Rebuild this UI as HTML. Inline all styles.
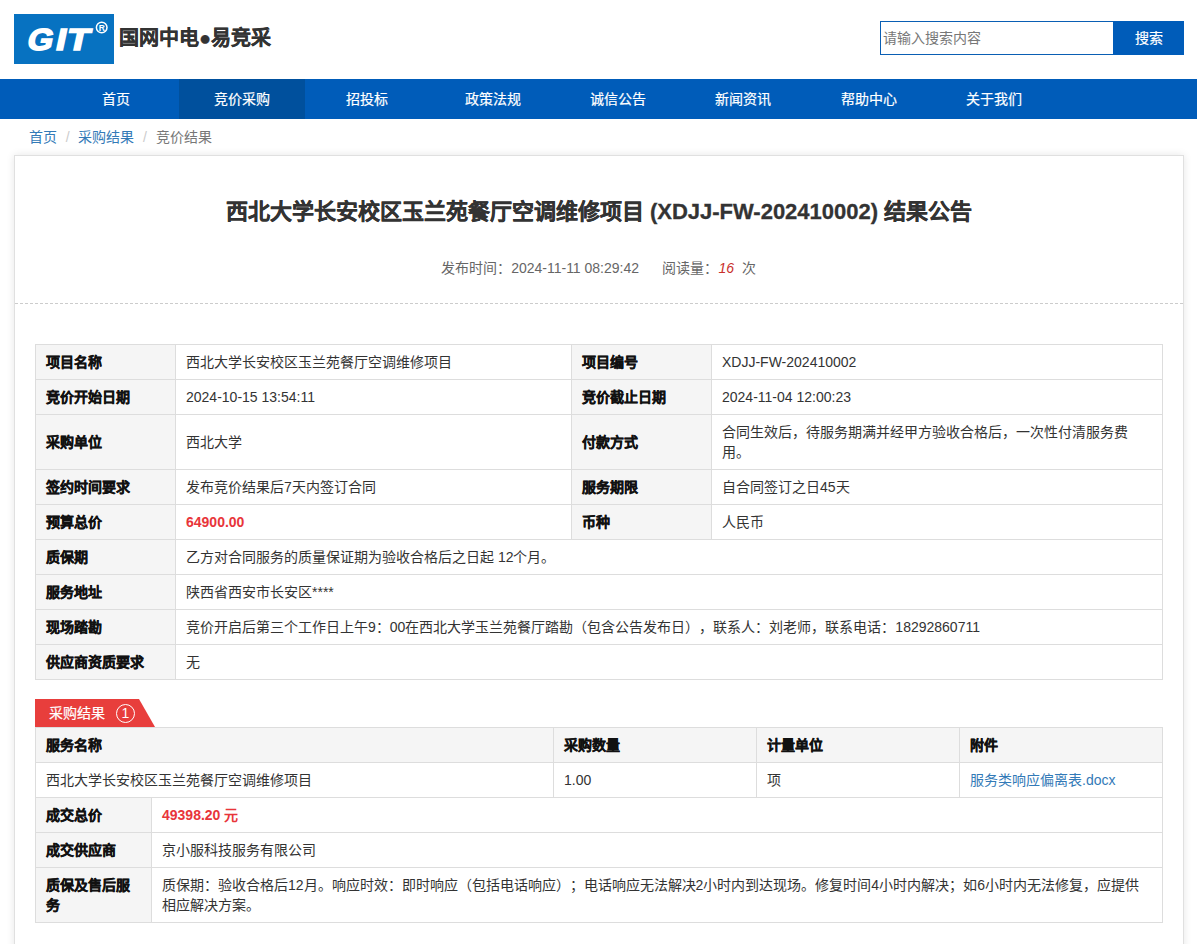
<!DOCTYPE html>
<html lang="zh-CN"><head><meta charset="utf-8">
<style>
*{box-sizing:border-box;margin:0;padding:0}
html,body{width:1197px;height:944px;overflow:hidden;background:#fff}
body{text-spacing-trim:space-all;font-family:"Liberation Sans",sans-serif;font-size:14px;line-height:20px;color:#333;position:relative}
.abs{position:absolute}
#logo{left:14px;top:14px;width:100px;height:50px;background:#0772c1}
#brand{left:119px;top:23px;font-size:20px;line-height:30px;font-weight:bold;color:#333;white-space:nowrap}
#search{left:880px;top:21px;width:233px;height:34px;border:1px solid #0a5fb4;border-right:0;color:#777;padding-left:2px;line-height:32px;font-size:14px}
#sbtn{left:1113px;top:21px;width:71px;height:34px;background:#005cb9;color:#fff;text-align:center;line-height:34px}
#nav{left:0;top:79px;width:1197px;height:40px;background:#005cb9}
#nav div{position:absolute;top:0;height:40px;width:125.4px;text-align:center;color:#fff;line-height:40px;white-space:nowrap}
#nav div.on{background:#00509d;width:126px}
#crumb{left:29px;top:127px;white-space:nowrap;color:#777}
#crumb a{color:#337ab7;text-decoration:none}
#crumb .sep{color:#ccc;padding:0 8.7px}
#panel{left:14px;top:155px;width:1170px;height:800px;border:1px solid #e0e0e0;box-shadow:0 0 8px rgba(0,0,0,.1)}

#title{left:15px;top:192px;width:1168px;text-align:center;font-size:22px;line-height:40px;font-weight:bold;color:#333;white-space:nowrap}
#meta{left:14.5px;top:258px;width:1168px;text-align:center;color:#666;white-space:nowrap}
#meta i{color:#c9302c}
#dash{left:15px;top:303px;width:1168px;height:1px;background:repeating-linear-gradient(90deg,#ccc 0,#ccc 3px,transparent 3px,transparent 5px)}
table{position:absolute;border-collapse:collapse;table-layout:fixed;border-spacing:0}
td,th{border:1px solid #ddd;padding:7px 10px;line-height:20px;text-align:left;vertical-align:middle;white-space:nowrap;overflow:hidden}
td.l,th{background:#f5f5f5;font-weight:bold;color:#111}
.red{color:#e8353a;font-weight:bold}
a.lnk{color:#337ab7;text-decoration:none}
#tab{left:35px;top:699px;width:120px;height:28px}
#tab span{position:absolute;left:14px;top:4px;color:#fff;white-space:nowrap}
#tab b{position:absolute;left:81px;top:5px;width:19px;height:19px;border:1px solid #fff;border-radius:50%;color:#fff;font-weight:normal;text-align:center;line-height:17px;font-size:14px}
#title,#brand,td.l,th{-webkit-text-stroke:0.3px currentColor}
#nav div,#sbtn,#tab span{-webkit-text-stroke:0.2px #fff}
</style></head><body>
<div id="logo" class="abs"><svg width="100" height="50"><g transform="translate(0,36) skewX(-12)" fill="#fff" stroke="#fff" stroke-width="1.6" font-family="Liberation Sans" font-weight="bold" font-size="30.5"><text x="12" y="0" textLength="25.5" lengthAdjust="spacingAndGlyphs">G</text><text x="40.5" y="0" textLength="10" lengthAdjust="spacingAndGlyphs">I</text><text x="51.5" y="0" textLength="22.5" lengthAdjust="spacingAndGlyphs">T</text></g><circle cx="87.7" cy="13.5" r="5.3" fill="none" stroke="#fff" stroke-width="1.5"/><text x="87.7" y="16.6" font-family="Liberation Sans" font-weight="bold" font-size="8.5" fill="#fff" text-anchor="middle">R</text></svg></div>
<div id="brand" class="abs">国网中电●易竞采</div>
<div id="search" class="abs">请输入搜索内容</div>
<div id="sbtn" class="abs">搜索</div>
<div id="nav" class="abs">
<div style="left:53.7px">首页</div>
<div class="on" style="left:179.1px">竞价采购</div>
<div style="left:304.5px">招投标</div>
<div style="left:429.9px">政策法规</div>
<div style="left:555.3px">诚信公告</div>
<div style="left:680.7px">新闻资讯</div>
<div style="left:806.1px">帮助中心</div>
<div style="left:931.5px">关于我们</div>
</div>
<div id="crumb" class="abs"><a>首页</a><span class="sep">/</span><a>采购结果</a><span class="sep">/</span>竞价结果</div>
<div id="panel" class="abs"></div>

<div id="title" class="abs">西北大学长安校区玉兰苑餐厅空调维修项目 (XDJJ-FW-202410002) 结果公告</div>
<div id="meta" class="abs">发布时间：2024-11-11 08:29:42&nbsp;&nbsp;&nbsp;&nbsp;&nbsp;&nbsp;阅读量：<i>16</i> <span style="margin-left:4px">次</span></div>
<div id="dash" class="abs"></div>
<table id="t1" style="left:35px;top:344px;width:1127px">
<colgroup><col style="width:140px"><col style="width:396px"><col style="width:140px"><col style="width:451px"></colgroup>
<tr style="height:35px"><td class="l">项目名称</td><td>西北大学长安校区玉兰苑餐厅空调维修项目</td><td class="l">项目编号</td><td>XDJJ-FW-202410002</td></tr>
<tr style="height:35px"><td class="l">竞价开始日期</td><td>2024-10-15 13:54:11</td><td class="l">竞价截止日期</td><td>2024-11-04 12:00:23</td></tr>
<tr style="height:55px"><td class="l">采购单位</td><td>西北大学</td><td class="l">付款方式</td><td>合同生效后，待服务期满并经甲方验收合格后，一次性付清服务费<br>用。</td></tr>
<tr style="height:35px"><td class="l">签约时间要求</td><td>发布竞价结果后7天内签订合同</td><td class="l">服务期限</td><td>自合同签订之日45天</td></tr>
<tr style="height:35px"><td class="l">预算总价</td><td><span class="red">64900.00</span></td><td class="l">币种</td><td>人民币</td></tr>
<tr style="height:35px"><td class="l">质保期</td><td colspan="3">乙方对合同服务的质量保证期为验收合格后之日起 12个月。</td></tr>
<tr style="height:35px"><td class="l">服务地址</td><td colspan="3">陕西省西安市长安区****</td></tr>
<tr style="height:35px"><td class="l">现场踏勘</td><td colspan="3">竞价开启后第三个工作日上午9：00在西北大学玉兰苑餐厅踏勘（包含公告发布日），联系人：刘老师，联系电话：18292860711</td></tr>
<tr style="height:35px"><td class="l">供应商资质要求</td><td colspan="3">无</td></tr>
</table>
<div id="tab" class="abs"><svg width="120" height="28" style="position:absolute;left:0;top:0"><polygon points="0,0 104,0 120,28 0,28" fill="#e83e3c"/></svg><span>采购结果</span><b>1</b></div>
<table id="t2" style="left:35px;top:727px;width:1127px">
<colgroup><col style="width:518px"><col style="width:203px"><col style="width:203px"><col style="width:203px"></colgroup>
<tr style="height:35px"><th>服务名称</th><th>采购数量</th><th>计量单位</th><th>附件</th></tr>
<tr style="height:35px"><td>西北大学长安校区玉兰苑餐厅空调维修项目</td><td>1.00</td><td>项</td><td><a class="lnk">服务类响应偏离表.docx</a></td></tr>
</table>
<table id="t3" style="left:35px;top:797px;width:1127px">
<colgroup><col style="width:116px"><col style="width:1011px"></colgroup>
<tr style="height:35px"><td class="l">成交总价</td><td><span class="red">49398.20 元</span></td></tr>
<tr style="height:35px"><td class="l">成交供应商</td><td>京小服科技服务有限公司</td></tr>
<tr style="height:55px"><td class="l">质保及售后服<br>务</td><td>质保期：验收合格后12月。响应时效：即时响应（包括电话响应）；电话响应无法解决2小时内到达现场。修复时间4小时内解决；如6小时内无法修复，应提供<br>相应解决方案。</td></tr>
</table>
</body></html>
